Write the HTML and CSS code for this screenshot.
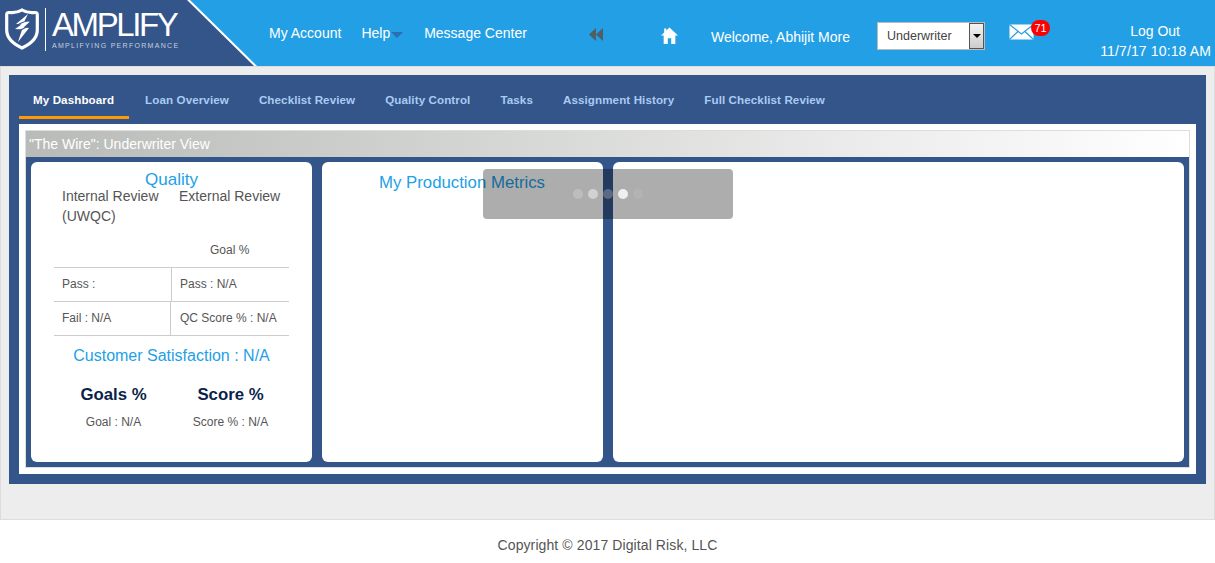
FILE: index.html
```html
<!DOCTYPE html>
<html lang="en">
<head>
    <meta charset="UTF-8">
    <title>Amplify - My Dashboard</title>
    <link rel="stylesheet" href="styles.css">
</head>
<body>
    <header class="topbar">
        <div class="brand">
            <svg class="brand-shield" viewBox="0 0 34 42" width="34" height="42">
                <path d="M17 2 C21 4.500 26 5 30 4.500 Q32.300 4.300 32.300 6.500 L32.300 22 C32.300 31 24.500 36.500 17 40 C9.500 36.500 1.700 31 1.700 22 L1.700 6.500 Q1.700 4.300 4 4.500 C8 5 13 4.500 17 2 Z" fill="none" stroke="#fff" stroke-width="3.200"/>
                <path d="M23 6 L11 16 L16.500 16.500 L10 21 L17 21.500 L13 34 L24 20 L18.500 19.500 L25 13.500 L19.500 13 Z" fill="#fff"/>
                <ellipse cx="17" cy="18" rx="10" ry="3" transform="rotate(-25 17 18)" fill="none" stroke="#34558a" stroke-width="1"/>
            </svg>
            <span class="brand-rule"></span>
            <div class="brand-text">
                <div class="brand-name">AMPLIFY</div>
                <div class="brand-tag">AMPLIFYING PERFORMANCE</div>
            </div>
        </div>
        <nav class="topnav">
            <a class="topnav-account">My Account</a>
            <a class="topnav-help">Help<span class="help-caret"></span></a>
            <a class="topnav-msg">Message Center</a>
        </nav>
        <svg class="icon-back" viewBox="0 0 14 13" width="14" height="13">
            <path d="M7 0 V13 L0 6.500 Z M14 0 V13 L7 6.500 Z" fill="#4f5f63"/>
        </svg>
        <svg class="icon-home" viewBox="0 0 16 16" width="17" height="17">
            <path d="M8 0.500 L16 8 H13.500 V16 H9.600 V10.500 H6.400 V16 H2.500 V8 H0 L3 5.200 V1.500 H5 V3.300 Z" fill="#fff"/>
        </svg>
        <div class="welcome">Welcome, Abhijit More</div>
        <div class="role-select">
            <span class="role-value">Underwriter</span>
            <span class="role-btn"><i></i></span>
        </div>
        <div class="mail">
            <svg viewBox="0 0 25 16" width="25" height="16">
                <rect x="0.500" y="0.500" width="24" height="15" fill="#fff"/>
                <path d="M0.500 0.500 L12.500 10 L24.500 0.500 M0.500 15.500 L9 7.500 M24.500 15.500 L16 7.500" fill="none" stroke="#239fe6" stroke-width="1.200"/>
            </svg>
            <span class="mail-badge">71</span>
        </div>
        <div class="session">
            <div class="logout">Log Out</div>
            <div class="clock">11/7/17 10:18 AM</div>
        </div>
    </header>

    <main class="page">
        <div class="panel">
            <ul class="tabs">
                <li class="tab active">My Dashboard</li>
                <li class="tab">Loan Overview</li>
                <li class="tab">Checklist Review</li>
                <li class="tab">Quality Control</li>
                <li class="tab">Tasks</li>
                <li class="tab">Assignment History</li>
                <li class="tab">Full Checklist Review</li>
            </ul>
            <div class="tab-body">
                <div class="wire">
                    <div class="wire-title">"The Wire": Underwriter View</div>
                    <div class="wire-cards">
                        <section class="card card-quality">
                            <h2 class="quality-title">Quality</h2>
                            <div class="review-heads">
                                <div class="review-internal">Internal Review (UWQC)</div>
                                <div class="review-external">External Review</div>
                            </div>
                            <div class="goal-head">Goal %</div>
                            <div class="stats">
                                <div class="stat-row">
                                    <div class="stat stat-left">Pass :</div>
                                    <div class="stat stat-right">Pass : N/A</div>
                                </div>
                                <div class="stat-row">
                                    <div class="stat stat-left stat-narrow">Fail : N/A</div>
                                    <div class="stat stat-right stat-wide">QC Score % : N/A</div>
                                </div>
                            </div>
                            <h2 class="csat-title">Customer Satisfaction : N/A</h2>
                            <div class="csat">
                                <div class="csat-col">
                                    <div class="csat-head">Goals %</div>
                                    <div class="csat-val">Goal : N/A</div>
                                </div>
                                <div class="csat-col">
                                    <div class="csat-head">Score %</div>
                                    <div class="csat-val">Score % : N/A</div>
                                </div>
                            </div>
                        </section>
                        <section class="card card-metrics">
                            <h2 class="metrics-title">My Production Metrics</h2>
                        </section>
                        <section class="card card-wide"></section>
                    </div>
                </div>
            </div>
        </div>
        <div class="loader">
            <span class="dot d1"></span>
            <span class="dot d2"></span>
            <span class="dot d3"></span>
            <span class="dot d4"></span>
            <span class="dot d5"></span>
        </div>
    </main>

    <footer class="footer">Copyright © 2017 Digital Risk, LLC</footer>
</body>
</html>
```

FILE: styles.css
```css
/* Basic Styling */
* {
    box-sizing: border-box;
}

html, body {
    height: 100%;
}

body {
    margin: 0;
    font-family: "Liberation Sans", Arial, sans-serif;
    background-color: #fff;
    color: #555;
    overflow: hidden;
}

/* Top bar */
.topbar {
    display: flex;
    align-items: center;
    height: 66px;
    background-color: #239fe6;
    color: #fff;
    font-size: 14px;
}

.brand {
    position: relative;
    display: flex;
    align-items: flex-start;
    flex-shrink: 0;
    width: 257px;
    height: 66px;
    padding: 8px 0 0 5px;
    background-color: #fff;
    clip-path: polygon(0 0, 190px 0, 257px 66px, 0 66px);
}

.brand::before {
    content: "";
    position: absolute;
    top: 0;
    left: 0;
    width: 100%;
    height: 100%;
    background-color: #34558a;
    clip-path: polygon(0 0, 187px 0, 254px 66px, 0 66px);
}

.brand-shield, .brand-rule, .brand-text {
    position: relative;
    flex-shrink: 0;
}

.brand-rule {
    width: 1px;
    height: 43px;
    margin: 0 6px 0 6px;
    background-color: #fff;
}

.brand-name {
    font-size: 33px;
    line-height: 34px;
    letter-spacing: -2.400px;
    color: #fff;
}

.brand-tag {
    font-size: 7px;
    line-height: 7px;
    letter-spacing: 1.300px;
    color: #c5cfdf;
}

.topnav {
    display: flex;
    flex-shrink: 0;
    width: 300px;
    margin-left: 12px;
}

.topnav-help {
    margin-left: 20px;
}

.help-caret {
    display: inline-block;
    margin-left: 1px;
    vertical-align: 0;
    border: 6.500px solid transparent;
    border-top: 6px solid #2a6fb0;
    border-bottom: 0;
}

.topnav-msg {
    margin-left: 21px;
}

.icon-back {
    flex-shrink: 0;
    margin: 3px 0 0 20px;
}

.icon-home {
    flex-shrink: 0;
    margin: 5px 0 0 58px;
}

.welcome {
    flex-shrink: 0;
    width: 166px;
    margin: 8px 0 0 33px;
}

.role-select {
    display: flex;
    flex-shrink: 0;
    width: 108px;
    height: 28px;
    margin-top: 5px;
    border: 1px solid #bbb;
    background-color: #fff;
    color: #444;
    font-size: 12.500px;
}

.role-value {
    flex: 1;
    padding: 6px 0 0 9px;
}

.role-btn {
    display: flex;
    align-items: center;
    justify-content: center;
    width: 15px;
    border: 1px solid #555;
    background: linear-gradient(#f4f4f4, #ccc);
}

.role-btn i {
    border: 4px solid transparent;
    border-top: 4px solid #000;
    border-bottom: 0;
}

.mail {
    position: relative;
    flex-shrink: 0;
    width: 25px;
    height: 16px;
    margin: 0 0 3px 24px;
}

.mail svg {
    display: block;
}

.mail-badge {
    position: absolute;
    top: -4px;
    left: 22px;
    width: 19px;
    height: 16px;
    border-radius: 8px;
    background-color: #f00;
    color: #fff;
    font-size: 11px;
    line-height: 16px;
    text-align: center;
}

.session {
    flex: 1;
    padding: 16px 4px 0 0;
    text-align: right;
}

.logout {
    padding-right: 31px;
    line-height: 20px;
}

.clock {
    line-height: 20px;
    letter-spacing: 0.130px;
}

/* Page area */
.page {
    position: relative;
    height: 454px;
    padding: 8px 8px 0;
    border: 1px solid #ddd;
    background-color: #ededed;
}

.panel {
    height: 409px;
    padding: 10px 10px 0;
    background-color: #34558a;
}

.tabs {
    display: flex;
    height: 39px;
    margin: 0;
    padding: 0;
    list-style: none;
}

.tab {
    height: 34px;
    padding: 8px 15px 0;
    font-size: 11.600px;
    font-weight: bold;
    letter-spacing: 0.100px;
    color: #a9cbf2;
}

.tab.active {
    margin-right: 1px;
    padding-left: 14px;
    border-bottom: 3px solid #f90;
    color: #fff;
}

.tab-body {
    height: 350px;
    padding: 6px;
    background-color: #fff;
}

.wire {
    height: 338px;
    border: 1px solid #ddd;
    background-color: #34558a;
}

.wire-title {
    height: 26px;
    padding-left: 3px;
    background: linear-gradient(90deg, #b8bbb7, #fff);
    color: #fff;
    font-size: 14px;
    line-height: 27px;
}

.wire-cards {
    display: flex;
    gap: 10px;
    padding: 5px 5px 0;
}

.card {
    height: 300px;
    border-radius: 6px;
    background-color: #fff;
}

.card-quality {
    width: 281px;
    padding: 0 23px;
}

.card-metrics {
    width: 281px;
}

.card-wide {
    flex: 1;
}

h2 {
    margin: 0;
    font-weight: normal;
    color: #239fe6;
}

.quality-title {
    padding-top: 8px;
    font-size: 17px;
    line-height: 19px;
    text-align: center;
}

.review-heads {
    display: flex;
    height: 57px;
    margin-top: -3px;
    font-size: 14px;
    line-height: 20px;
}

.review-internal {
    width: 125px;
    padding-left: 8px;
}

.review-external {
    flex: 1;
}

.goal-head {
    height: 24px;
    padding-left: 156px;
    font-size: 12px;
}

.stats {
    width: 235px;
    border-top: 1px solid #ccc;
    font-size: 12px;
}

.stat-row {
    display: flex;
    height: 34px;
    border-bottom: 1px solid #ccc;
}

.stat {
    padding: 9px 0 0 8px;
}

.stat-left {
    width: 118px;
    border-right: 1px solid #ccc;
}

.stat-narrow {
    width: 117px;
}

.stat-wide {
    padding-left: 9px;
}

.csat-title {
    margin-top: 10px;
    font-size: 16px;
    line-height: 19px;
    text-align: center;
}

.csat {
    display: flex;
    margin-top: 20px;
    padding-left: 1px;
}

.csat-col {
    width: 117px;
    text-align: center;
}

.csat-head {
    font-size: 16.800px;
    font-weight: bold;
    line-height: 19px;
    color: #0b1f4b;
}

.csat-val {
    margin-top: 11px;
    font-size: 12px;
}

.metrics-title {
    padding: 11px 0 0 57px;
    font-size: 16.800px;
    line-height: 19px;
}

/* Loading overlay */
.loader {
    position: absolute;
    top: 102px;
    left: 482px;
    display: flex;
    align-items: center;
    justify-content: center;
    gap: 5px;
    width: 250px;
    height: 50px;
    border-radius: 4px;
    background-color: rgba(0, 0, 0, 0.32);
}

.dot {
    width: 10px;
    height: 10px;
    border-radius: 50%;
    background-color: #fff;
}

.d1 { opacity: 0.2; }
.d2 { opacity: 0.45; }
.d3 { opacity: 0.25; }
.d4 { opacity: 0.8; }
.d5 { opacity: 0.08; }

/* Footer */
.footer {
    height: 43px;
    padding-top: 17px;
    font-size: 14px;
    letter-spacing: 0.100px;
    text-align: center;
}
```
